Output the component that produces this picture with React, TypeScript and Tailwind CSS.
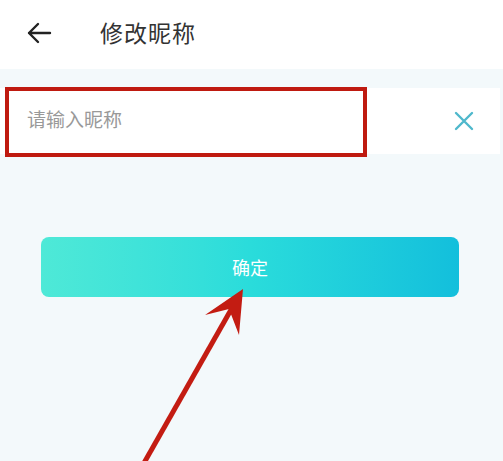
import React from "react";

export default function App() {
  return (
    <div
      className="relative w-[503px] h-[461px] overflow-hidden bg-[#f3f9fb]"
      style={{ fontFamily: '"Noto Sans CJK SC", "Noto Sans", sans-serif' }}
    >
      <div className="h-[69px] bg-white flex items-center pl-[26px] pb-[4px]">
        <svg width="26" height="22" viewBox="0 0 26 22" className="text-[#222]">
          <path d="M24 11H3M12 2L3 11l9 9" fill="none" stroke="currentColor" strokeWidth="2.4" strokeLinecap="round" strokeLinejoin="round" />
        </svg>
        <div className="ml-[48px] text-[23px] text-[#333] tracking-[1px]">修改昵称</div>
      </div>
      <div className="h-[19px]" />
      <div className="h-[66px] bg-white flex items-center pl-[27px] pr-[26px] w-[500px]">
        <div className="flex-1 text-[19px] text-[#999] pb-[3px]">请输入昵称</div>
        <svg width="20" height="20" viewBox="0 0 20 20">
          <path d="M2 2L18 18M18 2L2 18" stroke="#4fb8cc" strokeWidth="2.4" strokeLinecap="round" />
        </svg>
      </div>
      <div className="px-[41px] pt-[83px] w-[500px]">
        <div className="h-[60px] rounded-[8px] bg-gradient-to-r from-[#4ee9d7] via-[#2adcdb] to-[#13bfdc] flex items-center justify-center text-white text-[18px]">
          确定
        </div>
      </div>
      {/* annotations */}
      <div className="absolute left-[5px] top-[87px] w-[362px] h-[70px] border-[4px] border-[#bf1a10]" />
      <svg className="absolute left-0 top-0" width="503" height="461" viewBox="0 0 503 461">
        <line x1="140" y1="470" x2="232" y2="308" stroke="#c31c12" strokeWidth="5" />
        <path d="M243 289 L205 315 L229 309 L239 335 Z" fill="#c31c12" />
      </svg>
    </div>
  );
}
